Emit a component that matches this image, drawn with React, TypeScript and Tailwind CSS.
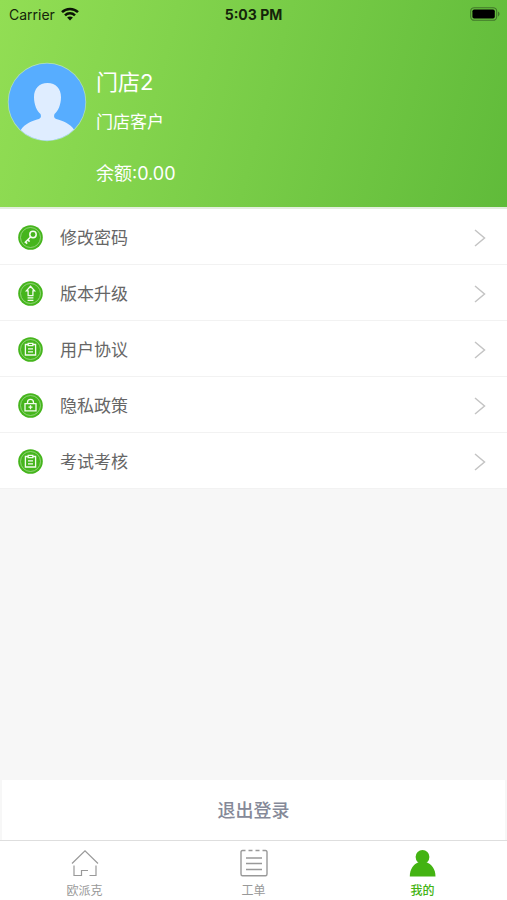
import type { ReactNode } from 'react'

const menuItems: { label: string; icon: ReactNode }[] = [
  { label: '修改密码', icon: <KeyGlyph /> },
  { label: '版本升级', icon: <UpgradeGlyph /> },
  { label: '用户协议', icon: <ClipboardGlyph /> },
  { label: '隐私政策', icon: <LockGlyph /> },
  { label: '考试考核', icon: <ClipboardGlyph /> },
]

function KeyGlyph() {
  return (
    <g>
      <circle cx="15" cy="9.5" r="3.2" strokeWidth="1.5" />
      <path d="M12.8 11.8 L6.8 17.8 M9.8 14.8 L11.6 16.6 M7.6 17 L9.2 18.6" strokeWidth="1.6" />
    </g>
  )
}

function UpgradeGlyph() {
  return <path d="M12.5 5.2 L16.6 9.8 H14.9 V14.6 H10.1 V9.8 H8.4 Z M9.6 16.9 H15.4 M9.6 19.3 H15.4" />
}

function ClipboardGlyph() {
  return (
    <g>
      <path d="M10 7.5 H7.4 V18 H17.6 V7.5 H15" />
      <path d="M10.2 6.4 H14.8 V8.6 H10.2 Z M10 11.8 H15 M10 14.8 H15" />
    </g>
  )
}

function LockGlyph() {
  return (
    <g>
      <path d="M7 10.6 H18 V17.8 H7 Z M9.5 10.6 V9.4 C9.5 5.4 15.5 5.4 15.5 9.4 V10.6" />
      <path d="M12.5 12.2 V16.2 M10.5 14.2 H14.5" />
    </g>
  )
}

function MenuBadge({ children }: { children: ReactNode }) {
  return (
    <svg viewBox="0 0 25 25" className="size-[25px] shrink-0" aria-hidden="true">
      <circle cx="12.5" cy="12.5" r="12.3" fill="#45b51c" />
      <circle cx="12.5" cy="12.5" r="10" fill="none" stroke="#a5dc90" strokeWidth="0.8" />
      <g fill="none" stroke="#f4fcf0" strokeWidth="1.3">
        {children}
      </g>
    </svg>
  )
}

function StatusBar() {
  return (
    <div className="grid h-7 grid-cols-3 items-center px-[7px] text-[14px] text-[#14240a]">
      <div className="flex items-center gap-1.5 pl-0.5">
        <span>Carrier</span>
        <svg viewBox="0 0 18 14" className="h-[14px] w-[18px]" aria-hidden="true">
          <g fill="none" stroke="#0b1406" strokeWidth="2.5">
            <path d="M1 5.2 C5.4 0.8 12.6 0.8 17 5.2" />
            <path d="M4 8.3 C6.8 5.6 11.2 5.6 14 8.3" />
          </g>
          <path d="M9 13.4 L6.1 10.5 C7.7 9 10.3 9 11.9 10.5 Z" fill="#0b1406" />
        </svg>
      </div>
      <span className="text-center font-bold">5:03 PM</span>
      <svg viewBox="0 0 30 14" className="h-[14px] w-[30px] justify-self-end" aria-hidden="true">
        <rect x="0.7" y="0.7" width="26" height="12.6" rx="3.6" fill="none" stroke="#42772b" strokeWidth="1.1" />
        <rect x="2.4" y="2.4" width="22.4" height="9.2" rx="1.8" fill="#000" />
        <path d="M28 4.6 C30 5.4 30 8.6 28 9.4 Z" fill="#42772b" />
      </svg>
    </div>
  )
}

function Avatar() {
  return (
    <svg viewBox="0 0 80 80" className="size-20 shrink-0" role="img" aria-label="头像">
      <clipPath id="avatar">
        <circle cx="40" cy="40" r="38.5" />
      </clipPath>
      <circle cx="40" cy="40" r="39.2" fill="#b6e3ba" />
      <g clipPath="url(#avatar)">
        <rect width="80" height="80" fill="#57adff" />
        <path
          d="M40.500 21 C49 21 54 27 54 35 C54 43 51 49 47.500 52 C46.500 55 47 56.500 51 57.500 C59 60 65 63 69 71 V80 H12 V71 C16 63 22 60 30 57.500 C34 56.500 34.500 55 33.500 52 C30 49 27 43 27 35 C27 27 32 21 40.500 21 Z"
          fill="#dfedff"
        />
      </g>
    </svg>
  )
}

function HomeIcon() {
  return (
    <svg viewBox="0 0 28 28" className="size-7" fill="none" stroke="#999" strokeWidth="1.2" aria-hidden="true">
      <path d="M1 14.500 L14 1.800 L27 14.500" />
      <path d="M3 16.500 V26.500 H10.500 V21.500 H17 M18.500 26.500 H25 V16.500" />
    </svg>
  )
}

function OrderIcon() {
  return (
    <svg viewBox="0 0 28 28" className="size-7" fill="none" stroke="#999" strokeWidth="1.4" aria-hidden="true">
      <path d="M5.500 1.500 H2.500 Q1 1.500 1 3 V25 Q1 26.800 2.500 26.800 H25.500 Q27 26.800 27 25 V3 Q27 1.500 25.500 1.500 H22.500 M8.500 1.500 H12.500 M15.500 1.500 H19.500" />
      <path d="M6 9 H22 M6 14.500 H22 M6 20.500 H22" />
    </svg>
  )
}

function UserIcon() {
  return (
    <svg viewBox="0 0 28 28" className="size-7" fill="#43b312" aria-hidden="true">
      <circle cx="13.500" cy="8" r="6.900" />
      <path d="M10 13 H17 C22.500 15 26.500 20 26.500 27.500 H0.800 C0.800 20 4.500 15 10 13 Z" />
    </svg>
  )
}

const tabs = [
  { label: '欧派克', icon: <HomeIcon />, active: false },
  { label: '工单', icon: <OrderIcon />, active: false },
  { label: '我的', icon: <UserIcon />, active: true },
]

export default function App() {
  return (
    <div className="flex min-h-screen flex-col bg-[#f7f7f7] font-['Inter','Noto_Sans_CJK_SC',sans-serif]">
      <header className="border-b-2 border-[#e3eede] bg-linear-[105deg,#92de54,#78cc47_52%,#60bb3a] bg-origin-border pb-[17px]">
        <StatusBar />
        <div className="flex px-[7px] pt-[34px] text-white">
          <Avatar />
          <div className="ml-[9px]">
            <h1 className="text-[22px] leading-10">门店2</h1>
            <p className="text-[17px] leading-10">门店客户</p>
            <p className="mt-4 text-[18px] leading-8">余额:0.00</p>
          </div>
        </div>
      </header>

      <main className="flex flex-1 flex-col">
        <ul className="bg-white">
          {menuItems.map((item) => (
            <li key={item.label} className="border-b border-[#f2f2f2]">
              <button type="button" className="flex h-[55px] w-full items-center pt-0.5 pr-[21px] pl-[18px]">
                <MenuBadge>{item.icon}</MenuBadge>
                <span className="ml-[17px] pt-0.5 text-[17px] text-[#666]">{item.label}</span>
                <svg viewBox="0 0 12 18" className="ml-auto h-[18px] w-3" fill="none" stroke="#c4c4c4" strokeWidth="1.5" aria-hidden="true">
                  <path d="M1 1 L10.500 9 L1 17" />
                </svg>
              </button>
            </li>
          ))}
        </ul>
        <button type="button" className="mx-0.5 mt-auto h-[60px] bg-white text-[18px] font-medium text-[#858998]">
          退出登录
        </button>
      </main>

      <nav className="grid h-[60px] grid-cols-3 border-t border-[#dedede] bg-white">
        {tabs.map((tab) => (
          <a
            key={tab.label}
            href="#"
            className={`flex flex-col items-center gap-0.5 pt-2 text-[12px] leading-6 ${tab.active ? 'font-medium text-[#43b312]' : 'text-[#999]'}`}
          >
            {tab.icon}
            <span>{tab.label}</span>
          </a>
        ))}
      </nav>
    </div>
  )
}
